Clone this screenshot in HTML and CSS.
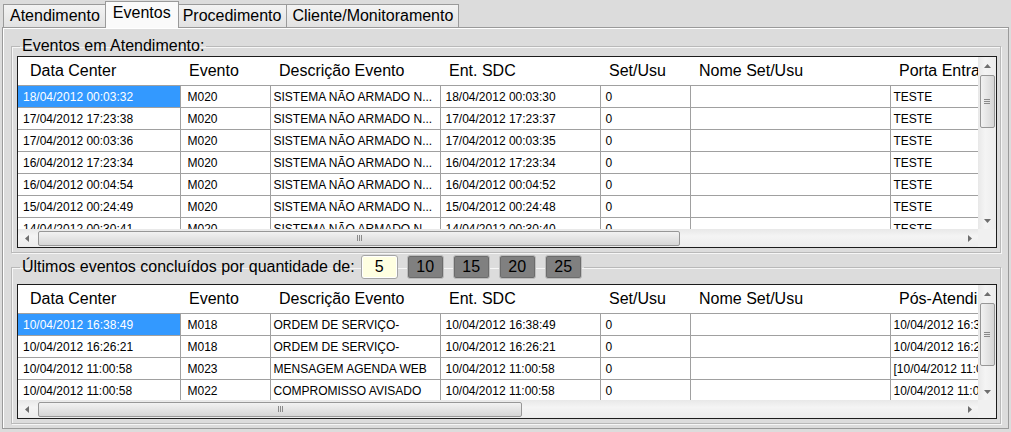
FILE: index.html
```html
<!DOCTYPE html>
<html lang="pt-BR">
<head>
    <meta charset="UTF-8">
    <meta name="viewport" content="width=device-width, initial-scale=1.0">
    <title>Eventos</title>
    <link rel="stylesheet" href="styles.css">
</head>
<body>
    <div class="tabs">
        <div class="tab">Atendimento</div>
        <div class="tab active">Eventos</div>
        <div class="tab">Procedimento</div>
        <div class="tab">Cliente/Monitoramento</div>
    </div>
    <div class="panel">
        <fieldset class="group">
            <legend class="group-title">Eventos em Atendimento:</legend>
            <div class="grid grid-tall">
                <div class="view">
                    <table class="events">
                        <colgroup>
                            <col class="c-data"><col class="c-evento"><col class="c-desc"><col class="c-ent"><col class="c-set"><col class="c-nome"><col class="c-last">
                        </colgroup>
                        <thead>
                            <tr><th class="first">Data Center</th><th>Evento</th><th>Descrição Evento</th><th>Ent. SDC</th><th>Set/Usu</th><th>Nome Set/Usu</th><th>Porta Entrada</th></tr>
                        </thead>
                        <tbody>
                            <tr><td class="sel">18/04/2012 00:03:32</td><td class="ev">M020</td><td class="ds">SISTEMA NÃO ARMADO N...</td><td>18/04/2012 00:03:30</td><td>0</td><td></td><td class="ds">TESTE</td></tr>
                            <tr><td>17/04/2012 17:23:38</td><td class="ev">M020</td><td class="ds">SISTEMA NÃO ARMADO N...</td><td>17/04/2012 17:23:37</td><td>0</td><td></td><td class="ds">TESTE</td></tr>
                            <tr><td>17/04/2012 00:03:36</td><td class="ev">M020</td><td class="ds">SISTEMA NÃO ARMADO N...</td><td>17/04/2012 00:03:35</td><td>0</td><td></td><td class="ds">TESTE</td></tr>
                            <tr><td>16/04/2012 17:23:34</td><td class="ev">M020</td><td class="ds">SISTEMA NÃO ARMADO N...</td><td>16/04/2012 17:23:34</td><td>0</td><td></td><td class="ds">TESTE</td></tr>
                            <tr><td>16/04/2012 00:04:54</td><td class="ev">M020</td><td class="ds">SISTEMA NÃO ARMADO N...</td><td>16/04/2012 00:04:52</td><td>0</td><td></td><td class="ds">TESTE</td></tr>
                            <tr><td>15/04/2012 00:24:49</td><td class="ev">M020</td><td class="ds">SISTEMA NÃO ARMADO N...</td><td>15/04/2012 00:24:48</td><td>0</td><td></td><td class="ds">TESTE</td></tr>
                            <tr><td>14/04/2012 00:30:41</td><td class="ev">M020</td><td class="ds">SISTEMA NÃO ARMADO N...</td><td>14/04/2012 00:30:40</td><td>0</td><td></td><td class="ds">TESTE</td></tr>
                        </tbody>
                    </table>
                </div>
                <div class="vscroll">
                    <div class="arrow"><svg width="7" height="4" viewBox="0 0 7 4"><path d="M0 4L3.5 0L7 4z" fill="#6e6e6e"/></svg></div>
                    <div class="vthumb thumb-tall"><svg width="6" height="5" viewBox="0 0 6 5"><path d="M0 0.5H6M0 2.5H6M0 4.5H6" stroke="#8a8a8a"/></svg></div>
                    <div class="fill"></div>
                    <div class="arrow"><svg width="7" height="4" viewBox="0 0 7 4"><path d="M0 0L3.5 4L7 0z" fill="#6e6e6e"/></svg></div>
                </div>
                <div class="hscroll">
                    <div class="arrow"><svg width="4" height="7" viewBox="0 0 4 7"><path d="M4 0L0 3.5L4 7z" fill="#6e6e6e"/></svg></div>
                    <div class="hthumb thumb-wide"><svg width="5" height="6" viewBox="0 0 5 6"><path d="M0.5 0V6M2.5 0V6M4.5 0V6" stroke="#8a8a8a"/></svg></div>
                    <div class="fill"></div>
                    <div class="arrow"><svg width="4" height="7" viewBox="0 0 4 7"><path d="M0 0L4 3.5L0 7z" fill="#6e6e6e"/></svg></div>
                </div>
                <div class="corner"></div>
            </div>
        </fieldset>

        <fieldset class="group group-last">
            <legend class="group-title group-bar">
                <span>Últimos eventos concluídos por quantidade de:</span>
                <span class="qty">
                    <button class="qty-btn current">5</button>
                    <button class="qty-btn">10</button>
                    <button class="qty-btn">15</button>
                    <button class="qty-btn">20</button>
                    <button class="qty-btn">25</button>
                </span>
            </legend>
            <div class="grid grid-short">
                <div class="view">
                    <table class="events">
                        <colgroup>
                            <col class="c-data"><col class="c-evento"><col class="c-desc"><col class="c-ent"><col class="c-set"><col class="c-nome"><col class="c-last">
                        </colgroup>
                        <thead>
                            <tr><th class="first">Data Center</th><th>Evento</th><th>Descrição Evento</th><th>Ent. SDC</th><th>Set/Usu</th><th>Nome Set/Usu</th><th>Pós-Atendimento</th></tr>
                        </thead>
                        <tbody>
                            <tr><td class="sel">10/04/2012 16:38:49</td><td class="ev">M018</td><td class="ds">ORDEM DE SERVIÇO-</td><td>10/04/2012 16:38:49</td><td>0</td><td></td><td class="ds">10/04/2012 16:38:49</td></tr>
                            <tr><td>10/04/2012 16:26:21</td><td class="ev">M018</td><td class="ds">ORDEM DE SERVIÇO-</td><td>10/04/2012 16:26:21</td><td>0</td><td></td><td class="ds">10/04/2012 16:26:21</td></tr>
                            <tr><td>10/04/2012 11:00:58</td><td class="ev">M023</td><td class="ds">MENSAGEM AGENDA WEB</td><td>10/04/2012 11:00:58</td><td>0</td><td></td><td class="ds">[10/04/2012 11:00:58]</td></tr>
                            <tr><td>10/04/2012 11:00:58</td><td class="ev">M022</td><td class="ds">COMPROMISSO AVISADO</td><td>10/04/2012 11:00:58</td><td>0</td><td></td><td class="ds">10/04/2012 11:00:58</td></tr>
                        </tbody>
                    </table>
                </div>
                <div class="vscroll">
                    <div class="arrow"><svg width="7" height="4" viewBox="0 0 7 4"><path d="M0 4L3.5 0L7 4z" fill="#6e6e6e"/></svg></div>
                    <div class="vthumb thumb-short"><svg width="6" height="5" viewBox="0 0 6 5"><path d="M0 0.5H6M0 2.5H6M0 4.5H6" stroke="#8a8a8a"/></svg></div>
                    <div class="fill"></div>
                    <div class="arrow"><svg width="7" height="4" viewBox="0 0 7 4"><path d="M0 0L3.5 4L7 0z" fill="#6e6e6e"/></svg></div>
                </div>
                <div class="hscroll">
                    <div class="arrow"><svg width="4" height="7" viewBox="0 0 4 7"><path d="M4 0L0 3.5L4 7z" fill="#6e6e6e"/></svg></div>
                    <div class="hthumb thumb-narrow"><svg width="5" height="6" viewBox="0 0 5 6"><path d="M0.5 0V6M2.5 0V6M4.5 0V6" stroke="#8a8a8a"/></svg></div>
                    <div class="fill"></div>
                    <div class="arrow"><svg width="4" height="7" viewBox="0 0 4 7"><path d="M0 0L4 3.5L0 7z" fill="#6e6e6e"/></svg></div>
                </div>
                <div class="corner"></div>
            </div>
        </fieldset>
    </div>
</body>
</html>
```

FILE: styles.css
```css
body {
    margin: 0;
    background-color: #dcdcdc;
    font-family: 'Liberation Sans', Arial, sans-serif;
    color: #000;
}
.tabs {
    display: flex;
    align-items: flex-end;
    height: 27px;
    padding-left: 3px;
}
.tab {
    height: 22px;
    padding: 0 5px;
    font-size: 16px;
    line-height: 22px;
    border: 1px solid #9a9a9a;
    border-bottom: none;
    background: linear-gradient(#f3f3f3, #e2e2e2);
    margin-right: -1px;
}
.tab:first-child {
    padding: 0 6px;
}
.tab.active {
    height: 26px;
    padding: 0 7px;
    margin: 0 -2px -1px -1px;
    line-height: 22px;
    background: #fafafa;
    position: relative;
    z-index: 1;
}
.panel {
    margin: 0 2px;
    border: 1px solid #9a9a9a;
    box-shadow: inset 1px 1px 0 #fff;
    padding: 9px 7px 4px 8px;
}
.group {
    margin: 0;
    padding: 1px 3px 4px 5px;
    border: 1px solid #b9b9b9;
    box-shadow: inset 1px 1px 0 #f6f6f6, 1px 1px 0 #f6f6f6;
    min-width: 0;
}
.group-last {
    margin-top: 2px;
    padding-top: 5px;
}
.group-title {
    margin-left: 3px;
    padding: 0 2px;
    font-size: 16px;
    line-height: 18px;
}
.group-bar {
    display: flex;
    align-items: center;
    height: 24px;
}
.qty {
    display: flex;
    gap: 9px;
    margin-left: 6px;
}
.qty-btn {
    width: 37px;
    height: 24px;
    padding: 0;
    font-family: 'Liberation Sans', Arial, sans-serif;
    font-size: 16px;
    color: #000;
    border: 1px solid #bdbdbd;
    border-radius: 3px;
    background: #808080;
    box-shadow: inset 0 0 0 1px #6c6c6c;
}
.qty-btn.current {
    background: #ffffe1;
    border-color: #a5a5a5;
    box-shadow: inset 0 0 0 1px #fff;
}
.grid {
    display: grid;
    grid-template-columns: 960px 18px;
    border: 1px solid #1c1c1c;
    background: #fff;
}
.grid-tall {
    grid-template-rows: 172px 18px;
}
.grid-short {
    grid-template-rows: 115px 18px;
}
.view {
    overflow: hidden;
}
.events {
    border-collapse: collapse;
    table-layout: fixed;
    width: 1001px;
}
.c-data { width: 162px; }
.c-evento { width: 90px; }
.c-desc { width: 170px; }
.c-ent { width: 160px; }
.c-set { width: 90px; }
.c-nome { width: 200px; }
.c-last { width: 129px; }
.events th {
    height: 28px;
    padding: 0 0 0 9px;
    font-size: 16px;
    font-weight: normal;
    text-align: left;
    white-space: nowrap;
    overflow: hidden;
    border-bottom: 1px solid #a0a0a0;
}
.events th.first {
    padding-left: 12px;
}
.events td {
    height: 21px;
    padding: 0 0 0 5px;
    font-size: 12px;
    white-space: nowrap;
    overflow: hidden;
    border-right: 1px solid #a0a0a0;
    border-bottom: 1px solid #a0a0a0;
}
.events td.ev {
    padding-left: 7px;
}
.events td.ds {
    padding-left: 3px;
}
.events td.sel {
    background: #3399ff;
    color: #fff;
}
.vscroll {
    display: flex;
    flex-direction: column;
    align-items: center;
    background: linear-gradient(90deg, #e8e8e8, #f4f4f4 40%, #ececec);
}
.hscroll {
    display: flex;
    align-items: center;
    background: linear-gradient(#e8e8e8, #f4f4f4 40%, #ececec);
}
.corner {
    background: #f0f0f0;
}
.arrow {
    flex: 0 0 17px;
    width: 17px;
    height: 17px;
    display: flex;
    justify-content: center;
    align-items: center;
}
.fill {
    flex: 1;
}
.vthumb {
    width: 15px;
    margin-top: 1px;
    box-sizing: border-box;
    border: 1px solid #979797;
    border-radius: 2px;
    background: linear-gradient(90deg, #f2f2f2, #e4e4e4 50%, #d6d6d6);
    display: flex;
    justify-content: center;
    align-items: center;
}
.hthumb {
    height: 15px;
    margin-left: 3px;
    box-sizing: border-box;
    border: 1px solid #979797;
    border-radius: 2px;
    background: linear-gradient(#f2f2f2, #e4e4e4 50%, #d6d6d6);
    display: flex;
    justify-content: center;
    align-items: center;
}
.thumb-tall { height: 53px; }
.thumb-short { height: 63px; }
.thumb-wide { width: 642px; }
.thumb-narrow { width: 484px; }
```
